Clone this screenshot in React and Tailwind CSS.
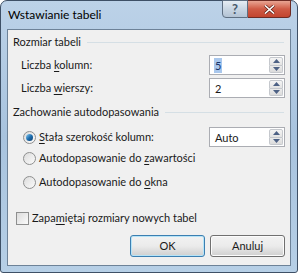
import React from 'react';

const font = { fontFamily: 'Lato, "Noto Sans", sans-serif' };

const U = ({ children }) => <span className="underline underline-offset-[2px] decoration-1">{children}</span>;

const SpinBox = ({ value, selected }) => (
    <div className="w-[76px] h-[20px] border border-[#abadb3] bg-white flex items-center">
        <div className="flex-1 pl-[4px] flex items-center">
            <span className={selected ? 'bg-[#a9c7ec] text-[#17346a] px-[1px] leading-[15px]' : 'px-[1px] leading-[15px]'}>{value}</span>
        </div>
        <div className="w-[15px] h-full flex flex-col py-[1px] pr-[1px]">
            <div className="flex-1 border border-[#c5c8cd] bg-gradient-to-b from-[#f5f5f5] to-[#e3e3e3] flex items-center justify-center rounded-t-[2px]">
                <svg width="7" height="4" viewBox="0 0 7 4"><path d="M0 4 L3.5 0 L7 4 Z" fill="#4d6185" /></svg>
            </div>
            <div className="flex-1 border border-t-0 border-[#c5c8cd] bg-gradient-to-b from-[#ebebeb] to-[#dcdcdc] flex items-center justify-center rounded-b-[2px]">
                <svg width="7" height="4" viewBox="0 0 7 4"><path d="M0 0 L3.5 4 L7 0 Z" fill="#4d6185" /></svg>
            </div>
        </div>
    </div>
);

const Radio = ({ checked }) => (
    <div className="w-[13px] h-[13px] rounded-full border border-[#8e8f8f] bg-gradient-to-br from-[#dcdcdc] to-[#fbfbfb] flex items-center justify-center shrink-0">
        {checked && (
            <div className="w-[7px] h-[7px] rounded-full bg-gradient-to-br from-[#8ad2f6] via-[#1e6fb0] to-[#0d3f6e]" />
        )}
    </div>
);

const GroupHeader = ({ children }) => (
    <div className="h-[15px] flex items-center pl-[5px] pr-[6px]">
        <span className="whitespace-nowrap">{children}</span>
        <div className="flex-1 h-px bg-[#d5dfe5] ml-[6px]" />
    </div>
);

const Button = ({ children, focused }) => (
    <div className={`w-[75px] h-[22px] rounded-[3px] border flex items-center justify-center bg-gradient-to-b from-[#f2f2f2] via-[#ebebeb] to-[#cfcfcf] ${focused ? 'border-[#3c7fb1] shadow-[inset_0_0_0_1px_#b6e4f8]' : 'border-[#707070] shadow-[inset_0_0_0_1px_#fcfcfc]'}`}>
        {children}
    </div>
);

export default function App() {
    return (
        <div style={font} className="w-[298px] h-[273px] text-[11px] text-[#1a1a1a]">
            <div className="w-full h-full rounded-t-[7px] rounded-b-[3px] border border-[#3e5066] bg-gradient-to-b from-[#bcd2e8] via-[#a8c3de] to-[#b6cfe6] flex flex-col">
                {/* Title bar */}
                <div className="h-[28px] flex items-start shrink-0">
                    <div className="pl-[7px] pt-[6px] text-[12px] leading-[16px] text-black">Wstawianie tabeli</div>
                    <div className="flex-1" />
                    <div className="flex mr-[6px] -mt-px">
                        <div className="w-[26px] h-[18px] rounded-bl-[4px] border border-[#5e6f82] bg-gradient-to-b from-[#e6edf4] via-[#c9d6e3] to-[#b3c3d4] flex items-center justify-center">
                            <span className="text-[13px] leading-none text-[#4a5a6b] font-bold">?</span>
                        </div>
                        <div className="w-[43px] h-[18px] rounded-br-[4px] border border-l-0 border-[#6e2b24] bg-gradient-to-b from-[#e8a493] via-[#cf5a45] to-[#c2452f] flex items-center justify-center">
                            <svg width="11" height="9" viewBox="0 0 11 9">
                                <path d="M1 0.5 L10 8.5 M10 0.5 L1 8.5" stroke="#5b1d14" strokeWidth="3" />
                                <path d="M1 0.5 L10 8.5 M10 0.5 L1 8.5" stroke="#ffffff" strokeWidth="1.6" />
                            </svg>
                        </div>
                    </div>
                </div>

                {/* Client area */}
                <div className="flex-1 mx-[6px] mb-[6px] border border-[#6d8298] bg-[#f0f0f0] flex flex-col pt-[5px]">
                    <GroupHeader>Rozmiar tabeli</GroupHeader>

                    <div className="mt-[5px] h-[20px] flex items-center pl-[13px] pr-[5px]">
                        <span className="flex-1">Liczba <U>k</U>olumn:</span>
                        <SpinBox value="5" selected />
                    </div>
                    <div className="mt-[3px] h-[20px] flex items-center pl-[13px] pr-[5px]">
                        <span className="flex-1">Liczba <U>w</U>ierszy:</span>
                        <SpinBox value="2" />
                    </div>

                    <div className="mt-[7px]">
                        <GroupHeader>Zachowanie autodopasowania</GroupHeader>
                    </div>

                    <div className="mt-[7px] h-[20px] flex items-center pl-[15px] pr-[5px]">
                        <Radio checked />
                        <span className="ml-[3px] flex-1"><U>S</U>tała szerokość kolumn:</span>
                        <SpinBox value="Auto" />
                    </div>
                    <div className="mt-px h-[20px] flex items-center pl-[15px]">
                        <Radio />
                        <span className="ml-[3px]">Autodopasowanie do <U>z</U>awartości</span>
                    </div>
                    <div className="mt-[4px] h-[20px] flex items-center pl-[15px]">
                        <Radio />
                        <span className="ml-[3px]">Autodopasowanie do <U>o</U>kna</span>
                    </div>

                    <div className="mt-[16px] h-[20px] flex items-center pl-[8px]">
                        <div className="w-[13px] h-[13px] border border-[#8e8f8f] bg-gradient-to-br from-[#dcdcdc] to-[#fbfbfb] shrink-0" />
                        <span className="ml-[3px]">Zapa<U>m</U>iętaj rozmiary nowych tabel</span>
                    </div>

                    <div className="mt-[7px] flex justify-end gap-[5px] pr-[5px]">
                        <Button focused>OK</Button>
                        <Button>Anuluj</Button>
                    </div>
                </div>
            </div>
        </div>
    );
}
